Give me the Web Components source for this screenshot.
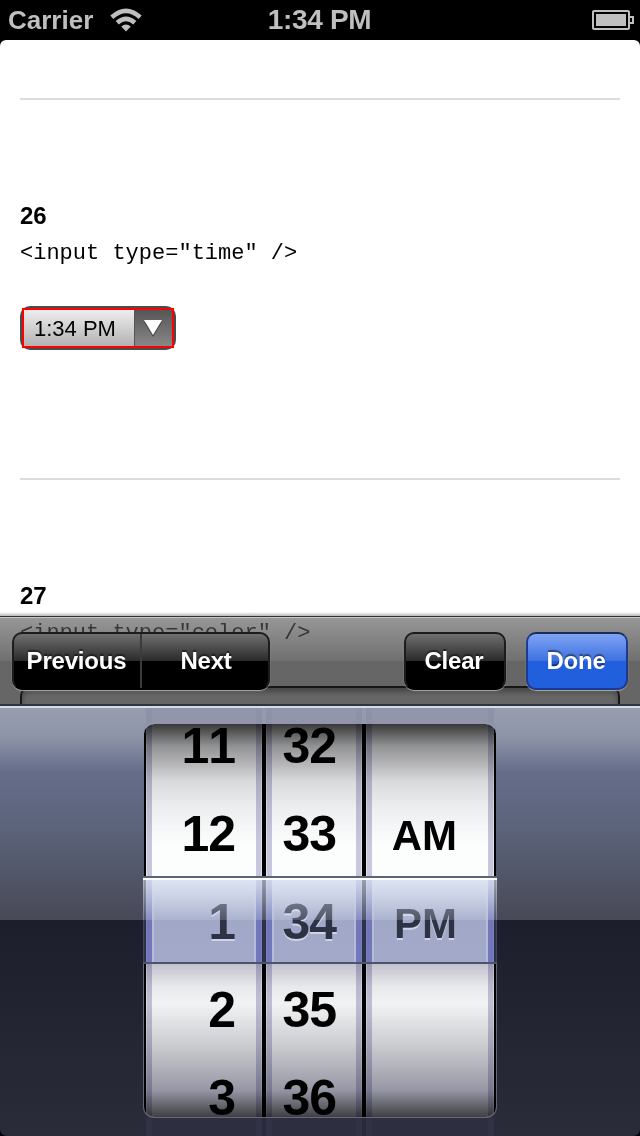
<!DOCTYPE html>
<html lang="en"><head><meta charset="utf-8"><title>Time input</title>
<style>html,body{margin:0;padding:0}body{width:640px;height:1136px;overflow:hidden;background:#000;font-family:"Liberation Sans",Arial,sans-serif}</style></head>
<body><phone-screen></phone-screen>
<script>
const define=(name,html,setup)=>customElements.define(name,class extends HTMLElement{
  connectedCallback(){ if(this.shadowRoot)return; const r=this.attachShadow({mode:"open"}); r.innerHTML=html; if(setup)setup(this,r); }
});
define("status-bar",`<style>
:host{display:grid;grid-template-columns:1fr auto 1fr;align-items:center;height:40px;background:#000;color:#bfbfbf;font-weight:bold;box-sizing:border-box;padding:0 6px 0 8px;line-height:40px}
.l{display:flex;align-items:center;gap:17px;font-size:26px}.t{font-size:28px;letter-spacing:-.35px;padding-right:3px}.b{justify-self:end}svg{display:block}
</style><div class="l"><span>Carrier</span><svg width="32" height="24" viewBox="0 0 32 24"><g fill="none" stroke="#bfbfbf" stroke-width="4.6"><path d="M1.8 9.2Q16-3.6 30.2 9.2"/><path d="M7.2 14.8Q16 7 24.8 14.8"/></g><path d="M11.3 18.6Q16 14.2 20.7 18.6L16 23.6Z" fill="#bfbfbf"/></svg></div><div class="t">1:34 PM</div>
<svg class="b" width="42" height="20" viewBox="0 0 42 20"><rect x="1" y="1" width="36" height="18" rx="1" fill="none" stroke="#bfbfbf" stroke-width="2"/><rect x="4" y="4" width="30" height="12" fill="#bfbfbf"/><path d="M38 7h3v6h-3" fill="none" stroke="#bfbfbf" stroke-width="2"/></svg>`);
define("time-field",`<style>
:host{display:flex;box-sizing:border-box;width:156px;height:44px;border-radius:10px;background:#4a4d50;padding:2px}
.f{display:flex;flex:1;box-sizing:border-box;border:2px solid #f00;}
.v{width:111px;box-sizing:border-box;padding-left:10px;font-size:22px;line-height:37px;background:linear-gradient(#eee,#b2b2b2);color:#000;border-right:1px solid #555}
.a{flex:1;display:grid;place-items:center;padding-right:2px;background:linear-gradient(#555,#888)}
</style><div class="f"><div class="v"><slot></slot></div><div class="a"><svg width="20" height="18" viewBox="0 0 20 18"><path d="M1 3H19L10 18Z" fill="#444"/><path d="M1 1H19L10 16Z" fill="#fff"/></svg></div></div>`);
define("test-case",`<style>
:host{display:block;height:380px;box-sizing:border-box}
.c{border-top:2px solid #dcdcdc;padding-top:102px}
b{display:block;font-size:24px;line-height:28px}
code{display:block;font:22px/26px "Liberation Mono","Courier New",monospace;margin:11px 0 39px;white-space:pre}
</style><div class="c"><b></b><code></code><slot></slot></div>`,(h,r)=>{r.querySelector("b").textContent=h.getAttribute("number");r.querySelector("code").textContent=`<input type="${h.getAttribute("kind")}" />`});
define("color-field",`<style>:host{display:block;height:44px;box-sizing:border-box;border:2px solid #000;border-radius:10px;box-shadow:inset 0 4px 5px #999;background:#fff}</style>`);
define("web-view",`<style>
:host{display:block;height:1096px;box-sizing:border-box;background:#fff;border-radius:6px 6px 0 0;padding:58px 20px 0;overflow:hidden}
</style><test-case number="26" kind="time"><time-field>1:34 PM</time-field></test-case><test-case number="27" kind="color"><color-field></color-field></test-case>`);
define("bar-button",`<style>
:host{display:flex;box-sizing:border-box;height:58px;border-radius:10px;border:2px solid #1c1c1c;border-bottom-color:#000;background:linear-gradient(#707070 0,#2a2a2a 50%,#000 50%);color:#fff;font-weight:bold;font-size:24px;letter-spacing:-.2px;line-height:54px;text-align:center;box-shadow:0 1px 1px #aaa;text-shadow:0 -2px 1px rgba(0,0,0,.45)}
:host([primary]){border-color:#1c2c58 #1c3a90 #1c3a90;background:linear-gradient(#7fa4f5 0,#3d71df 50%,#215fdd 50%)}
::slotted(*){flex:1;text-indent:-2px}::slotted(:nth-child(2)){border-left:2px solid #3b3b3b;margin-left:-1px}
</style><slot></slot>`);
define("form-bar",`<style>
:host{display:flex;box-sizing:border-box;height:94px;padding:20px 12px 0;border-bottom:2px solid #2f3545;gap:20px;background:linear-gradient(rgba(0,0,0,0),rgba(0,0,0,.28)) 0 0/100% 4px no-repeat,linear-gradient(rgba(0,0,0,.8),rgba(0,0,0,.8)) 0 4px/100% 1px no-repeat,linear-gradient(rgba(185,185,185,.8),rgba(185,185,185,.8)) 0 5px/100% 1px no-repeat,linear-gradient(rgba(94,94,94,.65),rgba(48,48,48,.69)) 0 6px/100% 43px no-repeat,linear-gradient(rgba(33,33,33,.69),rgba(33,33,33,.69)) 0 49px/100% 43px no-repeat}
.n{width:258px;margin-right:auto}.w{width:102px}.p{flex:0 0 127px}.x{text-indent:2px}
</style><bar-button class="n"><span class="p">Previous</span><span class="x">Next</span></bar-button><bar-button class="w"><span>Clear</span></bar-button><bar-button class="w" primary><span>Done</span></bar-button>`);
define("picker-wheel",`<style>
:host{display:block;position:relative;box-sizing:border-box;height:430px;font-weight:bold;font-size:50px;font-kerning:none;letter-spacing:-1px;color:#000;text-align:right;background:
linear-gradient(rgba(0,10,80,0),rgba(0,10,80,.27) 42px,rgba(0,10,80,.26)) 0 170px/100% 88px no-repeat,
linear-gradient(90deg,rgba(120,120,180,.2) 0 1px,rgba(91,91,155,.33) 1px 6px,transparent 6px calc(100% - 6px),rgba(91,91,155,.33) calc(100% - 6px) calc(100% - 1px),rgba(120,120,180,.2) calc(100% - 1px)),#fcfdfd}
.glow{position:absolute;left:0;right:0;top:174px;height:84px;background:linear-gradient(90deg,rgba(60,60,185,.45) 0 6px,rgba(255,255,255,.45) 6px 8px,transparent 8px calc(100% - 8px),rgba(255,255,255,.45) calc(100% - 8px) calc(100% - 6px),rgba(60,60,185,.45) calc(100% - 6px));-webkit-mask-image:linear-gradient(transparent,#000 45px);mask-image:linear-gradient(transparent,#000 45px)}
.rows{margin-top:var(--shift)}
.r{height:88px;line-height:88px;padding-right:var(--pad)}
.s{text-shadow:0 2px 0 #fff}
</style><div class="glow"></div><div class="rows"></div>`,(h,r)=>{
  h.getAttribute("values").split(",").forEach((v,i)=>{const d=document.createElement("div");d.className="r"+(i===2?" s":"");d.textContent=v;r.querySelector(".rows").append(d)});
});
define("time-picker",`<style>
:host{display:block;position:relative;height:430px;overflow:hidden;border-radius:0 0 7px 7px;background:linear-gradient(#d9dbe5 0 2px,#989dae 2px,#8e94a8 30px,#656d8a 66px,#5c647b 120px,#484957 214px,#1d1e2b 214px,#2b2c3a 430px)}
.wheels{display:flex;gap:4px;box-sizing:border-box;width:352px;height:430px;margin:0 auto;padding:0 2px;background:#000;overflow:hidden}
.h{width:116px;--pad:27px;--shift:-4px}.m{width:96px;--pad:26px;--shift:-4px}.a{width:128px;--pad:37px;--shift:-2px}
.win,.edge,.sel{position:absolute;pointer-events:none}
.edge{left:144px;width:352px}
.cols{background:linear-gradient(90deg,transparent 0 2px,rgba(90,95,150,.13) 2px 8px,rgba(90,95,150,.07) 8px 112px,rgba(90,95,150,.13) 112px 118px,transparent 118px 122px,rgba(90,95,150,.13) 122px 128px,rgba(90,95,150,.07) 128px 212px,rgba(90,95,150,.13) 212px 218px,transparent 218px 222px,rgba(90,95,150,.13) 222px 228px,rgba(90,95,150,.07) 228px 344px,rgba(90,95,150,.13) 344px 350px,transparent 350px)}
.top{top:0;height:18px;background-color:#959aac;box-shadow:inset 0 2px #d9dbe5}
.bot{top:411px;height:19px;background-color:#2a2b3a}
.win{left:144px;top:18px;width:352px;height:393px;border-radius:10px;mix-blend-mode:multiply;background:linear-gradient(rgba(0,0,0,.78) 0,rgba(15,15,20,.45) 22px,rgba(50,50,60,.17) 58px,rgba(90,90,110,.09) 85px,rgba(255,255,255,0) 120px,transparent 239px,rgba(85,75,115,.34) 239px,rgba(90,90,110,.12) 263px,rgba(80,80,100,.06) 279px,rgba(50,50,65,.23) 320px,rgba(40,40,70,.48) 366px,rgba(10,10,15,.78) 393px)}
.corners{position:absolute;left:143px;top:18px;width:354px;height:394px;overflow:hidden}
.corners:before{content:"";position:absolute;inset:0 1px 1px;border-radius:10px;box-shadow:0 0 0 10px #8e94a8;clip-path:inset(0 0 370px 0)}
.corners:after{content:"";position:absolute;inset:0 1px 1px;border-radius:10px;box-shadow:0 0 0 1px #666777,0 0 0 10px #2b2c3a;clip-path:inset(238px -1px -1px -1px)}
.sel{left:143px;top:170px;width:354px;height:88px;box-sizing:border-box;border-top:2px solid #5a6579;border-bottom:2px solid #495568;background:linear-gradient(#fff 0 2px,rgba(210,219,239,.72) 2px,rgba(160,172,208,.5) 42px,rgba(122,135,186,.37) 42px,rgba(122,135,190,.37) 84px) padding-box no-repeat}
</style><div class="wheels"><picker-wheel class="h" values="11,12,1,2,3"></picker-wheel><picker-wheel class="m" values="32,33,34,35,36"></picker-wheel><picker-wheel class="a" values=",AM,PM,,"></picker-wheel></div><div class="win"></div><div class="edge top cols"></div><div class="edge bot cols"></div><div class="corners"></div><div class="sel"></div>`,(h,r)=>{
  const s=document.createElement("style");s.textContent=":host{font-size:42px;letter-spacing:0}";r.querySelector(".a").shadowRoot.append(s);
});
define("phone-screen",`<style>
:host{display:block;position:relative;width:640px;height:1136px;overflow:hidden;background:#000}
.keys{position:absolute;left:0;right:0;bottom:0}
web-view{border-bottom-left-radius:12px;border-bottom-right-radius:12px}
</style><status-bar></status-bar><web-view></web-view><div class="keys"><form-bar></form-bar><time-picker></time-picker></div>`);
</script></body></html>
